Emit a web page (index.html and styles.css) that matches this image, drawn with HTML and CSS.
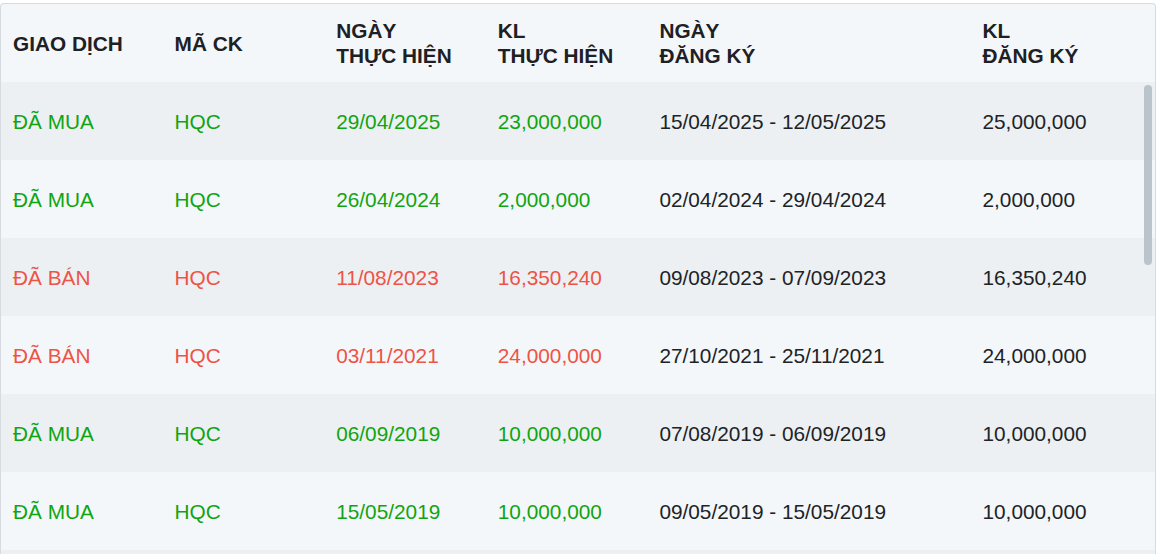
FILE: index.html
```html
<!DOCTYPE html>
<html lang="vi">
<head>
<meta charset="utf-8">
<title>Giao dịch cổ đông nội bộ</title>
<link rel="stylesheet" href="styles.css">
</head>
<body>
<div class="panel">
  <div class="row head">
    <div class="cell">GIAO DỊCH</div>
    <div class="cell">MÃ CK</div>
    <div class="cell">NGÀY<br>THỰC HIỆN</div>
    <div class="cell">KL<br>THỰC HIỆN</div>
    <div class="cell">NGÀY<br>ĐĂNG KÝ</div>
    <div class="cell">KL<br>ĐĂNG KÝ</div>
  </div>
  <div class="body">
    <div class="row buy"><div class="cell">ĐÃ MUA</div><div class="cell">HQC</div><div class="cell">29/04/2025</div><div class="cell">23,000,000</div><div class="cell plain">15/04/2025 - 12/05/2025</div><div class="cell plain">25,000,000</div></div>
    <div class="row buy"><div class="cell">ĐÃ MUA</div><div class="cell">HQC</div><div class="cell">26/04/2024</div><div class="cell">2,000,000</div><div class="cell plain">02/04/2024 - 29/04/2024</div><div class="cell plain">2,000,000</div></div>
    <div class="row sell"><div class="cell">ĐÃ BÁN</div><div class="cell">HQC</div><div class="cell">11/08/2023</div><div class="cell">16,350,240</div><div class="cell plain">09/08/2023 - 07/09/2023</div><div class="cell plain">16,350,240</div></div>
    <div class="row sell"><div class="cell">ĐÃ BÁN</div><div class="cell">HQC</div><div class="cell">03/11/2021</div><div class="cell">24,000,000</div><div class="cell plain">27/10/2021 - 25/11/2021</div><div class="cell plain">24,000,000</div></div>
    <div class="row buy"><div class="cell">ĐÃ MUA</div><div class="cell">HQC</div><div class="cell">06/09/2019</div><div class="cell">10,000,000</div><div class="cell plain">07/08/2019 - 06/09/2019</div><div class="cell plain">10,000,000</div></div>
    <div class="row buy"><div class="cell">ĐÃ MUA</div><div class="cell">HQC</div><div class="cell">15/05/2019</div><div class="cell">10,000,000</div><div class="cell plain">09/05/2019 - 15/05/2019</div><div class="cell plain">10,000,000</div></div>
    <div class="thumb"></div>
  </div>
</div>
</body>
</html>
```

FILE: styles.css
```css
html, body {
  margin: 0;
  padding: 0;
  overflow: hidden;
  background: #ffffff;
}

body {
  font-family: "Liberation Sans", Arial, sans-serif;
  font-size: 20.8px;
  color: #202326;
}

.panel {
  width: 1156px;
  box-sizing: border-box;
  margin-top: 3px;
  border: 1px solid #d6dbe0;
  border-bottom: none;
  border-radius: 4px 4px 0 0;
  background: #f4f7fa;
}

.row {
  display: grid;
  grid-template-columns: 161.6px 161.6px 161.6px 161.6px 323.1px 1fr;
  height: 78px;
  align-items: center;
}

.cell {
  padding-left: 12px;
  padding-top: 2px;
  white-space: nowrap;
}

.head {
  font-weight: bold;
  line-height: 25px;
  color: #1e2124;
}

.head .cell {
  padding-top: 0;
}

.body {
  position: relative;
  height: 472px;
  background: repeating-linear-gradient(#ecf0f3 0 78px, #f4f7fa 78px 156px);
}

.thumb {
  position: absolute;
  top: 3px;
  right: 3px;
  width: 8px;
  height: 180px;
  border-radius: 4px;
  background: #b9c4cb;
}

.body .row:nth-child(odd) {
  background: #ecf0f3;
}

.body .row:nth-child(even) {
  background: #f4f7fa;
}

.buy .cell {
  color: #10a510;
}

.sell .cell {
  color: #ee5346;
}

.row .cell.plain {
  color: #202326;
}
```
